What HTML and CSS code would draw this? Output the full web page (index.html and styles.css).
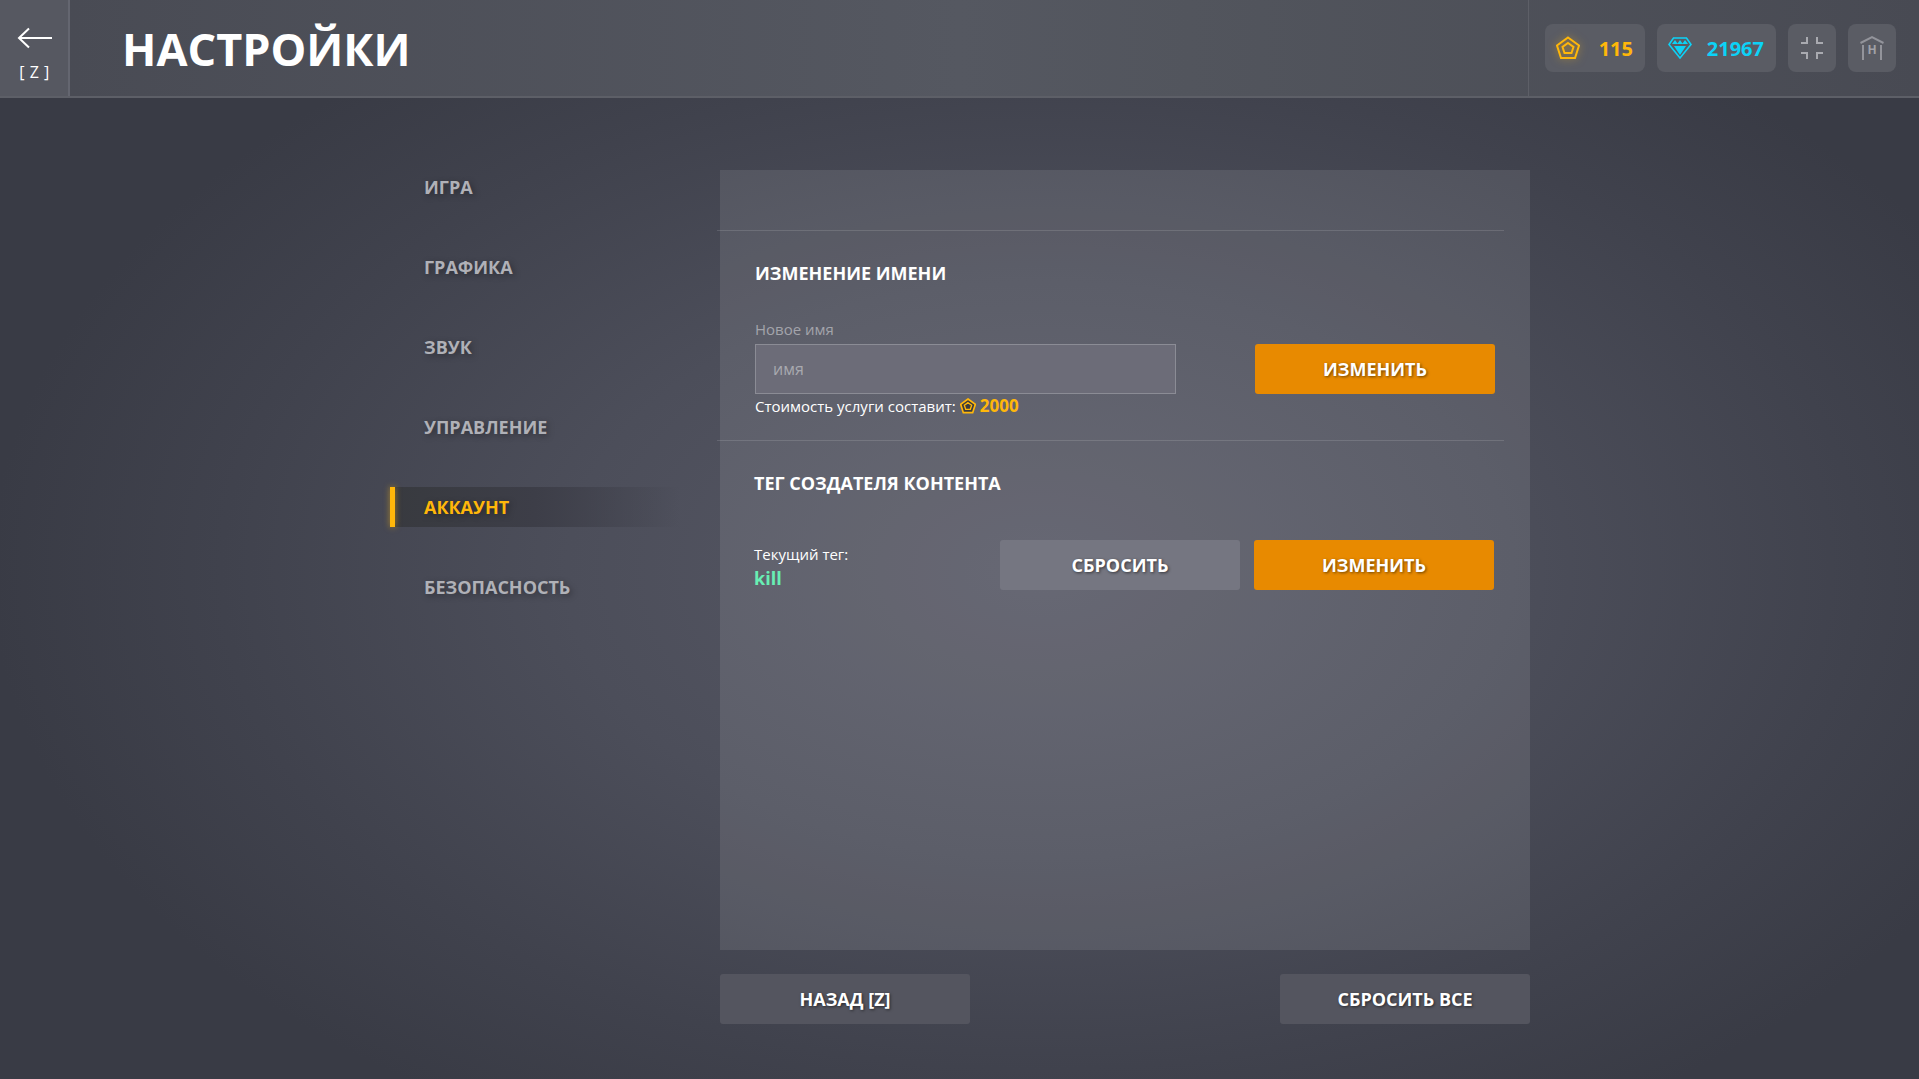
FILE: index.html
```html
<!DOCTYPE html>
<html lang="ru">
<head>
<meta charset="utf-8">
<title>Настройки</title>
<link rel="stylesheet" href="styles.css">
</head>
<body>
<header class="topbar">
  <div class="back">
    <svg class="back-icon" width="36" height="24" viewBox="0 0 36 24"><path d="M35 12H2M12 2.500L2 12l10 9.500" fill="none" stroke="#fff" stroke-width="2"/></svg>
    <span class="back-key">[ Z ]</span>
  </div>
  <h1 class="title">НАСТРОЙКИ</h1>
  <div class="wallet">
    <div class="chip chip-gold">
      <svg class="coin" width="24" height="24" viewBox="0 0 24 24"><path d="M12 1.500 23 9.500 19 22H5L1 9.500Z" fill="none" stroke="#ffb70a" stroke-width="2"/><path d="M12 7 17.500 11 15.500 17H8.500L6.500 11Z" fill="none" stroke="#ffb70a" stroke-width="2"/></svg>
      <span>115</span>
    </div>
    <div class="chip chip-cyan">
      <svg width="24" height="22" viewBox="0 0 24 22"><path d="M5.500 1H18.500L23 7.500 12 21 1 7.500Z" fill="none" stroke="#0cd2f7" stroke-width="1.600"/><path d="M6 9H18L12 18Z M7 3 9.500 6.500 12 3 14.500 6.500 17 3 20 7H4Z" fill="#0cd2f7"/></svg>
      <span>21967</span>
    </div>
    <div class="tool">
      <svg width="22" height="22" viewBox="0 0 22 22"><path d="M6 0V6H0M16 0V6H22M6 22V16H0M16 22V16H22" fill="none" stroke="#a9aab0" stroke-width="2"/></svg>
    </div>
    <div class="tool">
      <svg width="24" height="24" viewBox="0 0 24 24"><path d="M0.500 7 12 1.200 23.500 7" fill="none" stroke="#93949b" stroke-width="2"/><path d="M3 9V24M21 9V24" stroke="#93949b" stroke-width="2"/><text x="12" y="18" text-anchor="middle" class="tool-h">H</text></svg>
    </div>
  </div>
</header>

<main class="layout">
  <nav class="menu">
    <a class="menu-item">ИГРА</a>
    <a class="menu-item">ГРАФИКА</a>
    <a class="menu-item">ЗВУК</a>
    <a class="menu-item">УПРАВЛЕНИЕ</a>
    <a class="menu-item is-active">АККАУНТ</a>
    <a class="menu-item">БЕЗОПАСНОСТЬ</a>
  </nav>
  <div class="content">
    <section class="panel">
      <div class="panel-top"></div>
      <div class="block block-name">
        <h2 class="block-title">ИЗМЕНЕНИЕ ИМЕНИ</h2>
        <div class="name-row">
          <div class="field">
            <label class="field-label">Новое имя</label>
            <div class="input">имя</div>
            <p class="cost">Стоимость услуги составит:
              <svg class="cost-coin" width="16" height="16" viewBox="0 0 24 24"><path d="M12 1.500 23 9.500 19 22H5L1 9.500Z" fill="#3a3a3c" stroke="#ffb70a" stroke-width="2.500"/><path d="M12 7 17.500 11 15.500 17H8.500L6.500 11Z" fill="none" stroke="#ffb70a" stroke-width="2"/></svg>
              <b class="cost-value">2000</b></p>
          </div>
          <button class="btn btn-orange">ИЗМЕНИТЬ</button>
        </div>
      </div>
      <div class="block block-tag">
        <h2 class="block-title">ТЕГ СОЗДАТЕЛЯ КОНТЕНТА</h2>
        <div class="tag-row">
          <div class="tag-info">
            <span class="tag-label">Текущий тег:</span>
            <b class="tag-value">kill</b>
          </div>
          <button class="btn btn-grey">СБРОСИТЬ</button>
          <button class="btn btn-orange">ИЗМЕНИТЬ</button>
        </div>
      </div>
    </section>
    <footer class="actions">
      <button class="btn btn-foot">НАЗАД [Z]</button>
      <button class="btn btn-foot">СБРОСИТЬ ВСЕ</button>
    </footer>
  </div>
</main>
</body>
</html>
```
FILE: styles.css
```css
* { box-sizing: border-box; }
html, body { height: 100%; }
body {
  margin: 0;
  overflow: hidden;
  font-family: "Open Sans", sans-serif;
  color: #fff;
  background: radial-gradient(ellipse 1050px 640px at 1040px 570px, #585966 0%, #4c4e5a 45%, #40424d 78%, #393b45 100%);
  display: flex;
  flex-direction: column;
}
.topbar {
  height: 98px;
  display: flex;
  align-items: stretch;
  border-bottom: 2px solid #5d5f67;
  background: linear-gradient(90deg, #484a53 0%, #555861 50%, #52555d 62%, #484a53 100%);
}
.back {
  width: 70px;
  border-right: 2px solid #646670;
  background: #565861;
  display: flex;
  flex-direction: column;
  align-items: center;
  padding-top: 26px;
}
.back-icon { display: block; margin-left: 1px; }
.back-key { font-size: 16px; line-height: 20px; margin-top: 12px; letter-spacing: 0.5px; margin-left: 1px; }
.title {
  margin: 0 0 0 52px;
  padding-top: 1px;
  font-size: 45px;
  line-height: 96px;
  font-weight: 700;
  flex: 1;
}
.wallet {
  width: 391px;
  border-left: 1px solid #5d5f67;
  display: flex;
  align-items: center;
  gap: 12px;
  padding-left: 16px;
}
.chip, .tool {
  height: 48px;
  border-radius: 8px;
  background: #5a5c64;
  display: flex;
  align-items: center;
}
.chip { justify-content: space-between; padding: 0 12px 0 11px; font-size: 20px; font-weight: 700; }
.chip-gold { width: 100px; color: #ffb70a; }
.chip-cyan { width: 119px; color: #0cd2f7; }
.coin { filter: drop-shadow(0 0 4px rgba(255,183,10,.5)); }
.tool { width: 48px; justify-content: center; }
.tool-h { font: 700 12px "Open Sans", sans-serif; fill: #a0a1a7; }

.layout {
  flex: 1;
  display: flex;
  padding: 69px 0 0 390px;
}
.menu {
  width: 330px;
  display: flex;
  flex-direction: column;
  gap: 40px;
}
.menu-item {
  height: 40px;
  line-height: 40px;
  padding-left: 34px;
  font-size: 18px;
  font-weight: 700;
  color: #b0b1b7;
  text-shadow: 2px 2px 6px rgba(0,0,0,.35);
}
.menu-item.is-active {
  position: relative;
  width: 290px;
  color: #ffb70a;
  background: linear-gradient(90deg, #383a3f 0%, #3d3e48 50%, rgba(61,62,72,0) 100%);
}
.menu-item.is-active::before {
  content: "";
  position: absolute;
  left: 0;
  top: 0;
  width: 5px;
  height: 40px;
  background: #ffb70a;
  box-shadow: 0 0 6px rgba(255,183,10,.55);
}
.content { width: 810px; margin-top: 3px; }
.panel {
  height: 780px;
  background: rgba(255,255,255,.095);
}
.panel-top { height: 60px; }
.block { width: 787px; margin-left: -3px; border-top: 1px solid rgba(255,255,255,.13); }
.block-name { height: 210px; padding: 30px 0 0 38px; }
.block-tag { padding: 30px 0 0 37px; }
.block-title { margin: 0; font-size: 18px; line-height: 24px; font-weight: 700; }
.name-row { display: flex; margin-top: 34px; }
.field { width: 500px; }
.field-label { display: block; font-size: 15px; line-height: 20px; color: #a3a4ab; margin-bottom: 5px; }
.input {
  width: 421px;
  height: 50px;
  border: 1px solid #8b8c95;
  background: #6c6c78;
  font-size: 16px;
  line-height: 48px;
  padding-left: 17px;
  color: #a8a9af;
}
.cost { margin: 2px 0 0; font-size: 15px; line-height: 20px; display: flex; align-items: center; gap: 4px; white-space: nowrap; }
.cost-coin { display: block; }
.cost-value { font-size: 17px; color: #ffb70a; }
.btn {
  width: 240px;
  height: 50px;
  border: 0;
  border-radius: 3px;
  color: #fff;
  font-family: "Open Sans", sans-serif;
  font-size: 18px;
  font-weight: 700;
  text-shadow: 1px 1px 3px rgba(0,0,0,.55);
}
.name-row .btn { margin-top: 25px; }
.btn-orange { background: #e88a00; }
.btn-grey { background: #757681; }
.tag-row { display: flex; align-items: center; margin-top: 45px; gap: 14px; }
.tag-info { width: 232px; display: flex; flex-direction: column; padding-top: 3px; }
.tag-label { font-size: 15px; line-height: 20px; }
.tag-value { margin-top: 3px; font-size: 18px; line-height: 22px; color: #68eeb4; }
.actions { display: flex; justify-content: space-between; margin-top: 24px; }
.btn-foot { width: 250px; background: #54555f; }
```
